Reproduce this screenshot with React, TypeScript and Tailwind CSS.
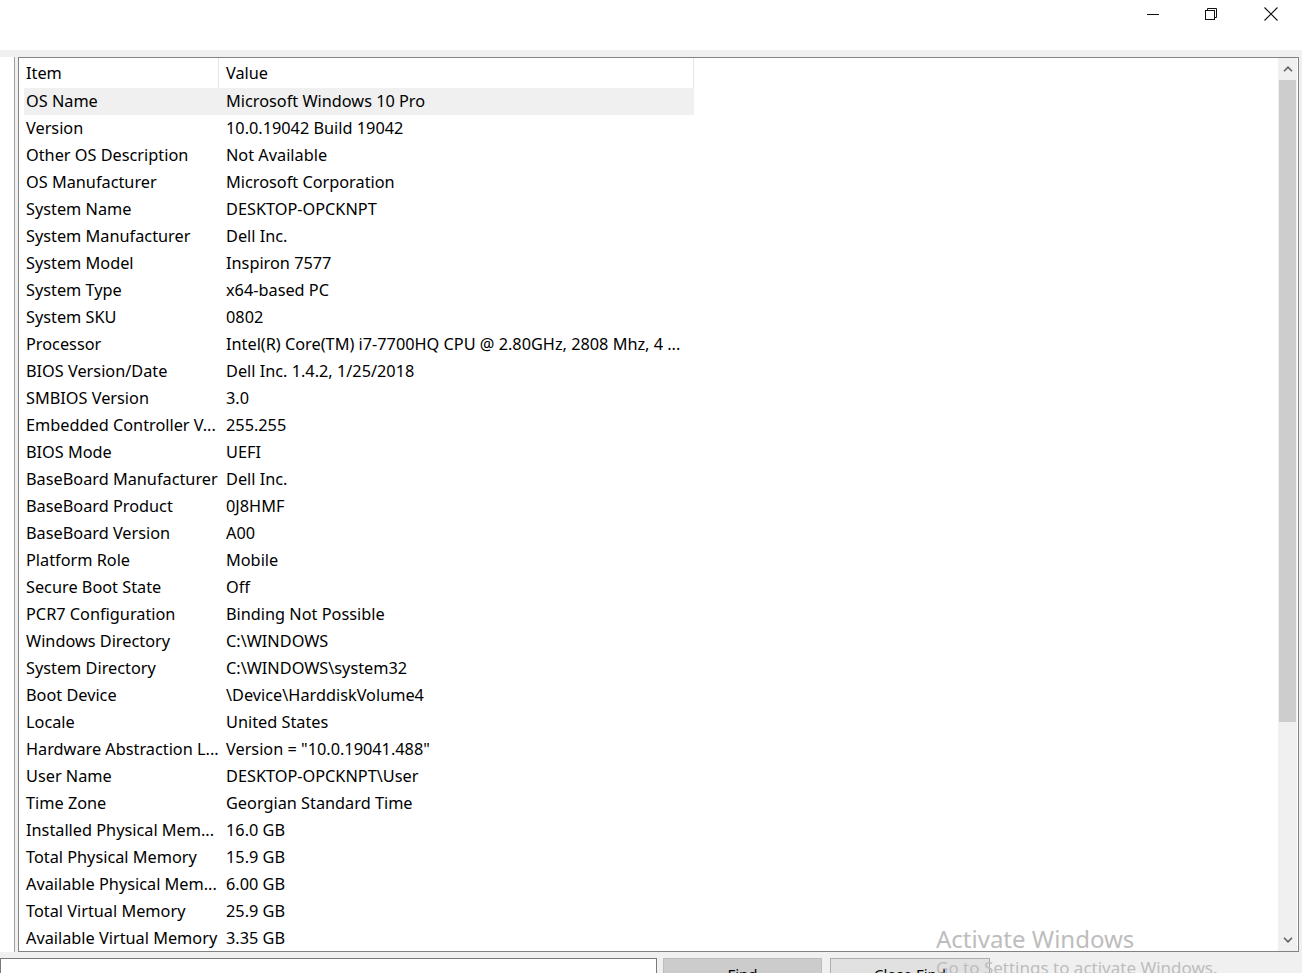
const rows: [string, string][] = [
  ["OS Name", "Microsoft Windows 10 Pro"],
  ["Version", "10.0.19042 Build 19042"],
  ["Other OS Description", "Not Available"],
  ["OS Manufacturer", "Microsoft Corporation"],
  ["System Name", "DESKTOP-OPCKNPT"],
  ["System Manufacturer", "Dell Inc."],
  ["System Model", "Inspiron 7577"],
  ["System Type", "x64-based PC"],
  ["System SKU", "0802"],
  ["Processor", "Intel(R) Core(TM) i7-7700HQ CPU @ 2.80GHz, 2808 Mhz, 4 ..."],
  ["BIOS Version/Date", "Dell Inc. 1.4.2, 1/25/2018"],
  ["SMBIOS Version", "3.0"],
  ["Embedded Controller V...", "255.255"],
  ["BIOS Mode", "UEFI"],
  ["BaseBoard Manufacturer", "Dell Inc."],
  ["BaseBoard Product", "0J8HMF"],
  ["BaseBoard Version", "A00"],
  ["Platform Role", "Mobile"],
  ["Secure Boot State", "Off"],
  ["PCR7 Configuration", "Binding Not Possible"],
  ["Windows Directory", "C:\\WINDOWS"],
  ["System Directory", "C:\\WINDOWS\\system32"],
  ["Boot Device", "\\Device\\HarddiskVolume4"],
  ["Locale", "United States"],
  ["Hardware Abstraction L...", 'Version = "10.0.19041.488"'],
  ["User Name", "DESKTOP-OPCKNPT\\User"],
  ["Time Zone", "Georgian Standard Time"],
  ["Installed Physical Mem...", "16.0 GB"],
  ["Total Physical Memory", "15.9 GB"],
  ["Available Physical Mem...", "6.00 GB"],
  ["Total Virtual Memory", "25.9 GB"],
  ["Available Virtual Memory", "3.35 GB"],
];

function TitleBar() {
  return (
    <div className="h-[50px] shrink-0 bg-white flex justify-end">
      <button className="w-[58px] h-[27px] flex items-center justify-center">
        <svg width="12" height="12" viewBox="0 0 12 12">
          <path d="M0 6.5h12" stroke="#111" strokeWidth="1" />
        </svg>
      </button>
      <button className="w-[58px] h-[27px] flex items-center justify-center">
        <svg width="12" height="12" viewBox="0 0 12 12" fill="none" stroke="#111" strokeWidth="1">
          <rect x="0.5" y="2.5" width="9" height="9" />
          <path d="M2.5 2.5V0.5h9v9h-2" />
        </svg>
      </button>
      <button className="w-[62px] h-[27px] flex items-center justify-center">
        <svg width="14" height="14" viewBox="0 0 14 14" stroke="#111" strokeWidth="1.1">
          <path d="M0.5 0.5l13 13M13.5 0.5l-13 13" />
        </svg>
      </button>
    </div>
  );
}

function ScrollBar() {
  return (
    <div className="w-[19px] bg-[#f0f0f0] flex flex-col mr-[1px]">
      <div className="h-[22px] flex items-center justify-center">
        <svg width="10" height="6" viewBox="0 0 10 6" fill="none" stroke="#606060" strokeWidth="1.6">
          <path d="M1 5.2L5 1.2l4 4" />
        </svg>
      </div>
      <div className="h-[642px] bg-[#cdcdcd] mx-[1px]" />
      <div className="flex-1" />
      <div className="h-[22px] flex items-center justify-center">
        <svg width="10" height="6" viewBox="0 0 10 6" fill="none" stroke="#606060" strokeWidth="1.6">
          <path d="M1 0.8L5 4.8l4-4" />
        </svg>
      </div>
    </div>
  );
}

export default function App() {
  return (
    <div
      className="relative w-[1302px] h-[973px] overflow-hidden bg-[#f0f0f0] text-[#000] flex flex-col"
      style={{ fontFamily: "'Noto Sans', 'Open Sans', sans-serif" }}
    >
      <TitleBar />

      <div className="flex shrink-0 h-[895px] mt-[7px]">
        {/* left tree pane */}
        <div className="w-[15px] bg-white border-r border-[#a0a0a0]" />

        {/* list view */}
        <div className="flex-1 ml-[3px] mr-[3px] border border-[#828282] bg-white flex overflow-hidden">
          <div className="flex-1 pl-[5px] overflow-hidden">
            <div className="flex h-[30px] items-center text-[16.3px] w-[670px] border-r border-[#e5e5e5]">
              <div className="w-[195px] pl-[2px] h-full flex items-center border-r border-[#e5e5e5]">Item</div>
              <div className="pl-[7px]">Value</div>
            </div>
            {rows.map(([k, v], i) => (
              <div
                key={k}
                className={
                  "flex h-[27px] items-center text-[16.3px] w-[670px] whitespace-nowrap " +
                  (i === 0 ? "bg-[#f0f0f0]" : "")
                }
              >
                <div className="w-[195px] pl-[2px]">{k}</div>
                <div className="pl-[7px]">{v}</div>
              </div>
            ))}
          </div>
          <ScrollBar />
        </div>
      </div>

      {/* find bar */}
      <div className="flex shrink-0 gap-[6px] mt-[6px] text-[15px]">
        <div className="w-[657px] h-[30px] bg-white border border-[#7a7a7a]" />
        <button className="w-[159px] h-[30px] bg-[#cccccc] border border-[#bcbcbc] pt-[2px] leading-none">Find</button>
        <button className="w-[160px] h-[30px] ml-[2px] bg-[#e1e1e1] border border-[#adadad] pt-[2px] leading-none">Close Find</button>
      </div>

      {/* activation watermark */}
      <div className="absolute left-[936px] top-[927px] text-[#bdbdbd] leading-none pointer-events-none">
        <div className="text-[24px]">Activate Windows</div>
        <div className="text-[17px] mt-[8px]">Go to Settings to activate Windows.</div>
      </div>
    </div>
  );
}
